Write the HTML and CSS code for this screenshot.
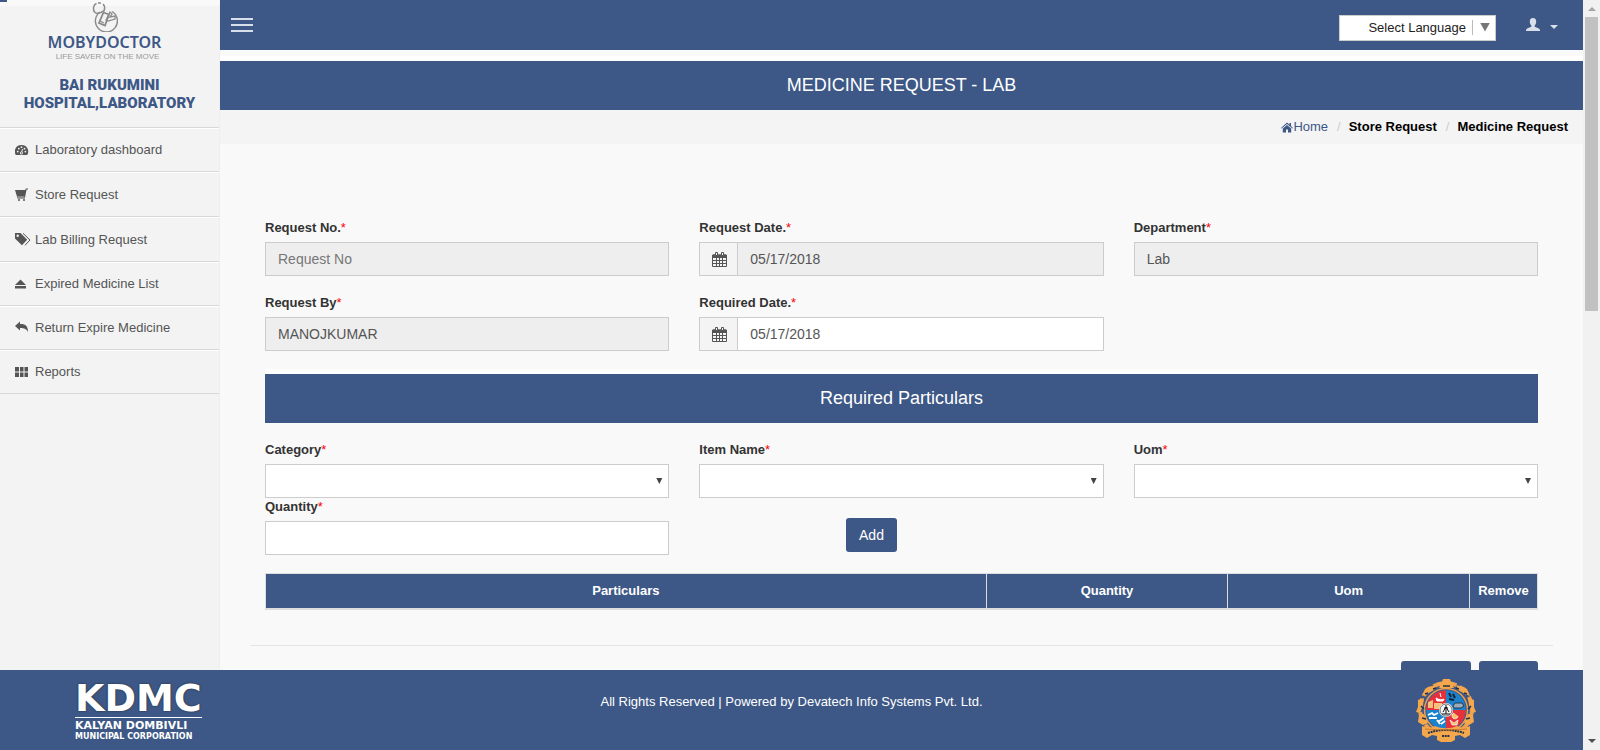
FILE: index.html
```html
<!DOCTYPE html>
<html lang="en">
<head>
<meta charset="utf-8">
<title>Medicine Request - Lab</title>
<link rel="stylesheet" href="styles.css">
</head>
<body>
<div class="shell">
  <div class="upper">
    <aside class="sidebar">
      <div class="brand">
        <svg class="brand-mark" width="26" height="30" viewBox="0 0 26 30" fill="none" stroke="#8a8a8a" stroke-width="1.4">
          <path d="M8 10A11 11 0 1 0 20 9.500"/>
          <path d="M4.500 1.500C1 3 .5 8 3 10.500c2 1.500 6 .5 8-1.500M6 1h3M11 2c2 2 2 5 .5 7.500" stroke-width="1.500"/>
          <path d="M11.500 10.500l5.500 2-4 11-6-2.500z" stroke-width="1.800"/>
          <path d="M8 19l4 2M14 18l4-8 2 2-2 3 5-1v3l-7 2z" stroke-width="1.300"/>
        </svg>
        <div class="brand-name">MOBYDOCTOR</div>
        <div class="brand-tag">LIFE SAVER ON THE MOVE</div>
      </div>
      <h2 class="hospital">BAI RUKUMINI HOSPITAL,LABORATORY</h2>
      <nav>
        <ul class="menu">
          <li><a href="#"><svg width="16" height="14" viewBox="0 0 16 14"><path fill="#555" d="M6.500 2a6.500 6.500 0 0 0-5.700 10h11.400A6.500 6.500 0 0 0 6.500 2z"/><g fill="#f3f3f3"><circle cx="2.700" cy="8.600" r=".9"/><circle cx="3.800" cy="5.700" r=".9"/><circle cx="6.500" cy="4.200" r=".9"/><circle cx="9.500" cy="5.700" r=".9"/><circle cx="10.400" cy="8.600" r=".9"/><circle cx="6.400" cy="10" r="1.500"/></g><path d="M6.500 10l1-4" stroke="#f3f3f3"/><circle cx="6.400" cy="10" r=".7" fill="#555"/></svg>Laboratory dashboard</a></li>
          <li class="tall"><a href="#"><svg width="16" height="14" viewBox="0 0 16 14"><path fill="#555" d="M0 2h10.300L10.800.5H13v1h-1.400L9.800 10.500H2.300v-1L1.800 8z"/><path d="M2.500 9h7" stroke="#f3f3f3" stroke-width=".7"/><path d="M3 12h2M8 12h2" stroke="#555" stroke-width="1.600"/></svg>Store Request</a></li>
          <li class="tall"><a href="#"><svg width="16" height="14" viewBox="0 0 16 14"><path fill="#555" fill-rule="evenodd" d="M0 0h5.500l6.700 6.800-5.300 5.400L0 5.500zM2.700 1.500a1.200 1.200 0 1 0 0 2.400 1.200 1.200 0 0 0 0-2.400z"/><path d="M8 .3l7 6.700-5 5.300" fill="none" stroke="#555"/></svg>Lab Billing Request</a></li>
          <li><a href="#"><svg width="16" height="14" viewBox="0 0 16 14"><path fill="#555" d="M5.500 2.500L11 8H0zM0 9h11v2.500H0z"/></svg>Expired Medicine List</a></li>
          <li><a href="#"><svg width="16" height="14" viewBox="0 0 16 14"><path fill="#555" d="M0 5l5-4.500V3c5 0 8 1.500 8 8-1.500-3-3.500-4-8-4v2.500z"/></svg>Return Expire Medicine</a></li>
          <li><a href="#"><svg width="16" height="14" viewBox="0 0 16 14"><path fill="#555" d="M0 2h4v4.500H0zM5 2h3.500v4.500H5zM9.500 2H13v4.500H9.500zM0 7.500h4V12H0zM5 7.500h3.500V12H5zM9.500 7.500H13V12H9.500z"/></svg>Reports</a></li>
        </ul>
      </nav>
    </aside>
    <main class="main">
      <header class="topbar">
        <button class="burger" type="button" aria-label="Menu"><span></span><span></span><span></span></button>
        <div class="tools">
          <button class="language" type="button"><span>Select Language</span><i></i></button>
          <button class="user" type="button" aria-label="Account">
            <svg width="14" height="13" viewBox="0 0 14 13"><path fill="#d8deea" d="M7 0c2.300 0 3.300 1.600 3.200 3.800C10.100 6 9.200 6.800 8.700 7.500v1.200c1 .8 4.300 1.200 5 2.600.3.600.3 1.700.3 1.700H0s0-1.100.3-1.700c.7-1.400 4-1.800 5-2.600V7.500C4.800 6.800 3.900 6 3.800 3.800 3.700 1.600 4.700 0 7 0z"/></svg>
            <i></i>
          </button>
        </div>
      </header>
      <h1 class="band">MEDICINE REQUEST - LAB</h1>
      <nav class="crumbs">
        <a href="#"><svg width="12" height="11" viewBox="0 0 12 11"><path fill="#3d5886" d="M6 .5L8.500 2.700V1H10v3l2 1.900-.6.700L6 2 .6 6.600 0 5.900zM6 3l4.200 3.500V10.500H7V7.500H5v3H1.800v-4z"/></svg>Home</a>
        <span class="sep">/</span><b>Store Request</b><span class="sep">/</span><b>Medicine Request</b>
      </nav>
      <form class="content">
        <div class="grid">
          <div class="field"><label for="no">Request No.<em>*</em></label><input id="no" placeholder="Request No" readonly></div>
          <div class="field"><label for="rdate">Request Date.<em>*</em></label>
            <div class="group"><span class="addon"><svg class="cal" width="15" height="15" viewBox="0 0 15 15"><use href="#cal"/></svg></span><input id="rdate" value="05/17/2018" readonly></div></div>
          <div class="field"><label for="dep">Department<em>*</em></label><input id="dep" value="Lab" readonly></div>
          <div class="field"><label for="by">Request By<em>*</em></label><input id="by" value="MANOJKUMAR" readonly></div>
          <div class="field"><label for="qdate">Required Date.<em>*</em></label>
            <div class="group"><span class="addon"><svg class="cal" width="15" height="15" viewBox="0 0 15 15"><g id="cal" fill="none" stroke="#555"><path d="M.5 3h14v11.500H.5zM0 5.500h15M0 8.500h15M0 11.500h15M4.500 5v9.500M7.500 5v9.500M10.500 5v9.500"/><path fill="#555" d="M1 3h13v2H1z"/><path fill="#f4f4f4" d="M3.500.5h2v3h-2zM9.500.5h2v3h-2z"/></g></svg></span><input id="qdate" value="05/17/2018"></div></div>
        </div>
        <h2 class="band">Required Particulars</h2>
        <div class="grid tight">
          <div class="field"><label for="cat">Category<em>*</em></label><div class="pick"><select id="cat"><option></option></select></div></div>
          <div class="field"><label for="item">Item Name<em>*</em></label><div class="pick"><select id="item"><option></option></select></div></div>
          <div class="field"><label for="uom">Uom<em>*</em></label><div class="pick"><select id="uom"><option></option></select></div></div>
          <div class="field"><label for="qty">Quantity<em>*</em></label><input id="qty"></div>
          <div class="add"><button class="btn" type="button">Add</button></div>
        </div>
        <table class="items">
          <colgroup><col class="c-part"><col class="c-mid"><col class="c-mid"><col class="c-rem"></colgroup>
          <thead><tr><th>Particulars</th><th>Quantity</th><th>Uom</th><th>Remove</th></tr></thead>
        </table>
        <hr>
        <div class="actions"><button class="btn wide" type="button" aria-label="Submit"></button><button class="btn short" type="button" aria-label="Back"></button></div>
      </form>
    </main>
  </div>
  <footer class="footer">
    <div class="kdmc"><strong>KDMC</strong><span class="l1">KALYAN DOMBIVLI</span><span class="l2">MUNICIPAL CORPORATION</span></div>
    <p>All Rights Reserved | Powered by Devatech Info Systems Pvt. Ltd.</p>
    <svg class="seal" width="60" height="63" viewBox="0 0 60 63">
      <g fill="none" stroke="#f0a04a">
        <circle cx="30" cy="31" r="21.500" stroke-width="1.500"/>
        <circle cx="30" cy="30" r="26" stroke-width="4" stroke-dasharray="10 3.600"/>
      </g>
      <g fill="#f5a74c">
        <path d="M22 4l4-1 1-3h7l1 3 4 1-2 3 1 2H23l1-2-3-1z"/>
        <path d="M12 8l8-2-2 5-7 4-5 2 3-7zM48 8l-8-2 2 5 7 4 5 2-3-7z"/>
        <path d="M2 21l6-2-1 7-3 8-4-1 2-5zM58 21l-6-2 1 7 3 8 4-1-2-5z"/>
        <path d="M3 36l5-1 4 9-5 2-5-3zM57 36l-5-1-4 9 5 2 5-3z"/>
      </g>
      <path d="M9 15l3-1M5 27l3 3M6 39l4 1M51 15l-3-1M55 27l-3 3M54 39l-4 1M27 7h7M17 10l3-1M43 10l-3-1" stroke="#27324a" stroke-width="1.600"/>
      <circle cx="30" cy="31" r="19.800" fill="#1d82cc"/>
      <path d="M30 31V11.200A19.800 19.800 0 0 0 10.200 31zM30 31h19.800A19.800 19.800 0 0 1 30 50.800z" fill="#e6303a"/>
      <path d="M12 23l5-2v8h-5zM18 24h8v6h-8z" fill="#f5c07c"/>
      <path d="M20 19c3 2 6 2 8 1l-1 2h-6zM24 14l1 4" stroke="#fff" fill="#fff"/>
      <path d="M33 14l2 4M37 15l2 4M33 20l5 1" stroke="#123" stroke-width="2"/>
      <path d="M37 27l2-3h7l2 3-3 2h-7z" fill="#9ab" stroke="#123" stroke-width=".8"/>
      <path d="M12 36l4-2 2 2 4-2M13 39h8M22 43l6-4M21 41l3 4M25 45l4-3" stroke="#fff" stroke-width="1.800" fill="none"/>
      <path d="M38 34a3 3 0 1 0 4 3M34 41l4 3 4-3-1 5h-5z" fill="#f7c06a" stroke="#fff" stroke-width=".7"/>
      <circle cx="30" cy="31" r="7" fill="#f4f4f4"/>
      <circle cx="30" cy="31" r="6" fill="none" stroke="#555" stroke-width=".8"/>
      <path d="M26 35h8M27 33l3-5 3 5M28 29h4M30 26v9" stroke="#111" stroke-width="1" fill="none"/>
      <path d="M6 47c5 2 9 2 13 0 7 3 15 3 22 0 4 2 8 2 13 0v9l-5 3-5-3-5 1v4l-4 2H25l-4-2v-4l-5-1-5 3-5-3z" fill="#f5a74c"/>
      <path d="M12 54c12-4 24-4 36 0M26 57h8" stroke="#27324a" stroke-width="2" stroke-dasharray="2 .7" fill="none"/>
      <path d="M9 50c12 1 30 1 42 0" stroke="#c47a2c" fill="none"/>
    </svg>
  </footer>
  <span class="corner"></span>
</div>
<div class="scroll"><i class="up"></i><b></b><i class="down"></i></div>
</body>
</html>
```
FILE: styles.css
```css
* { box-sizing: border-box; }
body {
  margin: 0;
  display: flex;
  height: 100vh;
  overflow: hidden;
  font: 13px/18px "Liberation Sans", Arial, sans-serif;
  color: #333;
  background: #f9f9f9;
}
button, input, select { font: inherit; margin: 0; }
a { color: inherit; text-decoration: none; }

.shell { flex: 1; min-width: 0; display: flex; flex-direction: column; position: relative; }
.upper { flex: 1; min-height: 0; display: flex; overflow: hidden; }
.corner { position: absolute; left: 0; top: 0; width: 7px; height: 2px; background: #3d5886; }

/* Sidebar */
.sidebar {
  flex: none;
  width: 220px;
  background: #f3f3f3;
  border-top: 6px solid #f9f9f9;
  border-right: 1px solid #eee;
}
.brand { display: flex; flex-direction: column; align-items: center; margin-top: -4px; padding-right: 10px; }
.brand-mark { display: block; }
.brand-name { font: 600 16px/20px "Noto Sans", "Open Sans", sans-serif; color: #3d5886; }
.brand-tag { font: 8px/10px "Liberation Sans", Arial, sans-serif; color: #999; padding-left: 6px; }
.hospital { margin: 14px 10px 15px; font: 900 15px/18px Roboto, "Liberation Sans", sans-serif; text-align: center; color: #3d5886; }
.menu { list-style: none; margin: 0; padding: 0; border-top: 1px solid #d8d8d8; }
.menu li { height: 44px; border-top: 1px solid #fff; border-bottom: 1px solid #d8d8d8; }
.menu .tall { height: 45px; }
.menu a { display: flex; align-items: center; gap: 4px; height: 100%; padding-left: 15px; color: #555; }

/* Top bar */
.main { flex: 1; min-width: 0; }
.topbar { display: flex; align-items: center; justify-content: space-between; height: 50px; padding: 0 25px 0 11px; background: #3d5886; margin-bottom: 6px; }
.burger { display: flex; flex-direction: column; gap: 4px; width: 22px; padding: 0; border: 0; background: none; }
.burger span { height: 2px; background: #d8deea; }
.tools { display: flex; align-items: center; gap: 30px; margin-top: 6px; }
.language {
  display: flex; align-items: center; justify-content: flex-end;
  width: 157px; height: 26px; padding: 0 5px 2px 0;
  border: 1px solid #ccc; background: #fff; color: #222;
}
.language span { padding-right: 6px; border-right: 1px solid #bbb; line-height: 15px; }
.language i { width: 10px; height: 9px; margin-left: 7px; background: #777; clip-path: polygon(0 0, 100% 0, 50% 100%); }
.user { display: flex; align-items: center; gap: 10px; padding: 0 0 8px; border: 0; background: none; }
.user i { border: 4px solid transparent; border-top-color: #d8deea; border-bottom: 0; margin-top: 5px; }

.band {
  margin: 0; height: 54px; padding: 14px 0; border-top: 5px solid #fff;
  background: #3d5886; color: #fff; font-size: 18px; font-weight: 400; line-height: 20px; text-align: center;
}
.crumbs { display: flex; justify-content: flex-end; height: 34px; padding: 8px 15px; background: #f4f4f4; color: #000; }
.crumbs a { color: #3d5886; display: flex; align-items: center; }
.sep { padding: 0 8px 0 9px; color: #ccc; }

/* Form */
.content { padding: 75px 45px 0; }
.grid { display: grid; grid-template-columns: repeat(3, 1fr); gap: 18px 30px; margin-bottom: 18px; }
.tight { row-gap: 0; margin-top: 18px; }
.field label { display: block; margin-bottom: 5px; font-weight: 700; }
.field em { color: #f00; font-style: normal; font-weight: 400; }
.field input, .field select {
  display: block; width: 100%; height: 34px; padding: 6px 12px;
  border: 1px solid #ccc; border-radius: 0; background: #fff; color: #555; font-size: 14px;
}
.field input:read-only { background: #eee; }
.field input::placeholder { color: #777; opacity: 1; }
.group { display: flex; }
.addon { flex: none; display: flex; align-items: center; justify-content: center; width: 38px; padding-left: 1px; border: 1px solid #ccc; border-right: 0; background: #f4f4f4; }
.pick { position: relative; }
.pick select { appearance: none; }
.pick::after { content: ""; position: absolute; right: 7px; top: 14px; width: 6px; height: 6px; background: #444; clip-path: polygon(0 0, 100% 0, 50% 100%); }
.add { display: flex; justify-content: center; align-items: flex-start; padding: 20px 60px 0 0; }
.btn { height: 34px; padding: 6px 13px; border: 0; border-radius: 3px; background: #3d5886; color: #fff; font-size: 14px; line-height: 20px; }
.wide { width: 70px; }
.short { width: 59px; }

.items { width: 100%; border-collapse: collapse; table-layout: fixed; }
.items th { height: 35px; padding: 7px 8px; border: 1px solid #ddd; border-bottom-width: 2px; background: #3d5886; color: #fff; }
.c-mid { width: 19%; }
.c-rem { width: 68px; }
hr { margin: 35px -15px 15px; border: 0; border-top: 1px solid #e4e4e4; }
.actions { display: flex; justify-content: flex-end; gap: 8px; }

/* Footer */
.footer { display: grid; grid-template-columns: 1fr auto 1fr; height: 80px; padding: 0 107px 0 75px; background: #3d5886; color: #fff; }
.footer p { margin: 23px 0 0 32px; }
.kdmc { font-family: "DejaVu Sans", sans-serif; font-weight: 700; display: flex; flex-direction: column; align-items: flex-start; padding-top: 9px; }
.kdmc strong { font-size: 38px; line-height: 38px; border-bottom: 1px solid #fff; text-shadow: 0 0 2px #222; }
.l1 { font-size: 11px; line-height: 13px; margin-top: 1px; }
.l2 { font-size: 8px; line-height: 10px; }
.seal { justify-self: end; margin-top: 9px; }

/* Scrollbar */
.scroll { flex: none; width: 17px; background: #f1f1f1; display: flex; flex-direction: column; align-items: center; padding: 7px 0; }
.scroll b { width: 13px; height: 40%; margin: 6px 0 auto; background: #c1c1c1; }
.up { border: 4px solid transparent; border-bottom-color: #a3a3a3; border-top: 0; }
.down { border: 4px solid transparent; border-top-color: #505050; border-bottom: 0; }
```
